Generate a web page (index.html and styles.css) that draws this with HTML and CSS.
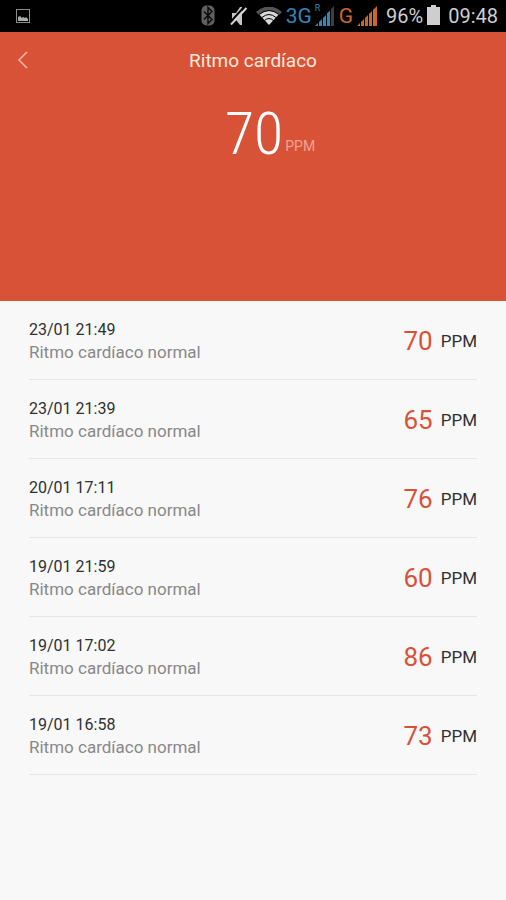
FILE: index.html
```html
<!DOCTYPE html>
<html lang="es">
<head>
<meta charset="utf-8">
<meta name="viewport" content="width=device-width, initial-scale=1">
<title>Ritmo cardíaco</title>
<link rel="stylesheet" href="styles.css">
</head>
<body>
<div class="status">
  <svg class="status-picture" width="14" height="14" viewBox="0 0 14 14"><rect x=".5" y=".5" width="13" height="13" fill="none" stroke="#8c8c8c"/><path d="M2 12V8l2-1 2 2 1-1 2 1 1-1 2 2v2z" fill="#a8adab"/></svg>
  <svg class="bluetooth" width="14" height="22" viewBox="0 0 14 22"><rect x=".5" y=".5" width="13" height="20" rx="5" fill="#606060"/><path d="M3 6.500l8 8-4 4V2.500l4 4-8 8" fill="none" stroke="#0b0b0b" stroke-width="1.500"/></svg>
  <svg class="mute" width="18" height="20" viewBox="0 0 18 20"><path d="M2 7h4l4-6h2v18h-2l-4-5H2z" fill="#c4c4c4"/><path d="M0 16.500L15 0" stroke="#000" stroke-width="2"/><path d="M1 18.500L16.500 2" stroke="#d2d2d2" stroke-width="2"/></svg>
  <svg class="wifi" width="26" height="18" viewBox="0 0 26 18"><path d="M1 5Q13-4 25 5L13 18z" fill="#d8d8d8"/><path d="M0 5Q13-6 26 5l-3 3Q13 0 3 8z" fill="#555"/><g fill="none" stroke="#000" stroke-width="1"><path d="M3 7.500Q13-.5 23 7.500"/><path d="M6 10.500Q13 4.500 20 10.500"/><path d="M8.500 13.500Q13 9.500 17.500 13.500"/></g></svg>
  <span class="network data">3G</span>
  <span class="signal"><svg width="20" height="20" viewBox="0 0 20 20"><g fill="#3087b9"><path d="M0 20l3-3v3zM4 16l3-3v7H4zM8 12l3-3v11H8zM12 7.500l3-3V20h-3z"/></g><path d="M16 3l3-3v20h-3z" fill="#453b3b"/></svg><small>R</small></span>
  <span class="network roaming">G</span>
  <svg class="bars" width="21" height="20" viewBox="0 0 21 20"><path d="M0 20l3-3v3zM4 16l3-3v7H4zM8 12l3-3v11H8zM12 8l3-3v15h-3zM16 4l4-4v20h-4z" fill="#cc6728"/></svg>
  <span class="percent">96%</span>
  <svg class="battery" width="13" height="20" viewBox="0 0 13 20"><path d="M4 0h5v2h4v18H0V2h4z" fill="#cecece"/></svg>
  <span class="clock">09:48</span>
</div>
<header class="hero">
  <div class="bar">
    <button class="back" aria-label="Atrás"><svg width="12" height="18" viewBox="0 0 12 18"><path d="M10 1L2 9l8 8" fill="none" stroke="#f8b9a4" stroke-width="1.500"/></svg></button>
    <h1>Ritmo cardíaco</h1>
  </div>
  <p class="reading"><span class="reading-value">70</span><span class="reading-unit">PPM</span></p>
</header>
<main>
  <ul class="history">
    <li><div><time>23/01 21:49</time><p>Ritmo cardíaco normal</p></div><b>70</b><span>PPM</span></li>
    <li><div><time>23/01 21:39</time><p>Ritmo cardíaco normal</p></div><b>65</b><span>PPM</span></li>
    <li><div><time>20/01 17:11</time><p>Ritmo cardíaco normal</p></div><b>76</b><span>PPM</span></li>
    <li><div><time>19/01 21:59</time><p>Ritmo cardíaco normal</p></div><b>60</b><span>PPM</span></li>
    <li><div><time>19/01 17:02</time><p>Ritmo cardíaco normal</p></div><b>86</b><span>PPM</span></li>
    <li><div><time>19/01 16:58</time><p>Ritmo cardíaco normal</p></div><b>73</b><span>PPM</span></li>
  </ul>
</main>
</body>
</html>
```
FILE: styles.css
```css
* { box-sizing: border-box; }
body {
  margin: 0;
  background: #f8f8f8;
  color: #303030;
  font-family: Roboto, "Liberation Sans", sans-serif;
}
p, h1, ul { margin: 0; padding: 0; }
svg { display: block; flex: none; }

.status {
  display: flex;
  align-items: center;
  height: 32px;
  padding: 0 8px 0 16px;
  background: #000;
  color: #cecece;
  font-size: 20px;
  line-height: 32px;
}
.status-picture { margin-right: auto; }
.mute { margin-left: 15px; }
.wifi { margin: 0 4px 0 8px; }
.network { font-size: 21px; }
.data { color: #3087b9; }
.roaming { margin: 0 4px; color: #cc6728; }
.signal { position: relative; margin-left: 3px; }
.signal small {
  position: absolute;
  top: -2px;
  left: 0;
  color: #3087b9;
  font-size: 9px;
  line-height: 8px;
}
.percent { margin: 0 4px 0 8px; }
.battery { margin-bottom: 2px; }
.clock { margin-left: 8px; }

.hero {
  height: 269px;
  background: #d85237;
  color: #fff;
}
.bar {
  display: grid;
  grid-template-columns: 48px 1fr 48px;
  align-items: center;
  height: 56px;
}
.back {
  display: flex;
  align-items: center;
  height: 48px;
  padding: 0 0 0 17px;
  border: 0;
  background: none;
}
h1 {
  color: #ffeadd;
  font-size: 19px;
  font-weight: 400;
  text-align: center;
}
.reading {
  display: flex;
  justify-content: center;
  align-items: flex-end;
  gap: 2px;
  padding: 14px 0 0 34px;
}
.reading-value {
  font-family: "Roboto Condensed", Roboto, sans-serif;
  font-size: 60px;
  font-weight: 300;
  line-height: 64px;
}
.reading-unit {
  color: #efa48f;
  font-size: 14px;
  line-height: 40px;
}

.history { margin: 0 29px; list-style: none; }
.history li {
  display: flex;
  align-items: center;
  height: 79px;
  padding-top: 2px;
  border-bottom: 1px solid #e6e6e6;
  font-size: 17px;
  line-height: 23px;
}
.history div { flex: 1; }
.history time { display: block; font-size: 16px; }
.history p { color: #888; }
.history b {
  margin-right: 8px;
  color: #d85237;
  font-size: 26px;
  font-weight: 400;
}
```
